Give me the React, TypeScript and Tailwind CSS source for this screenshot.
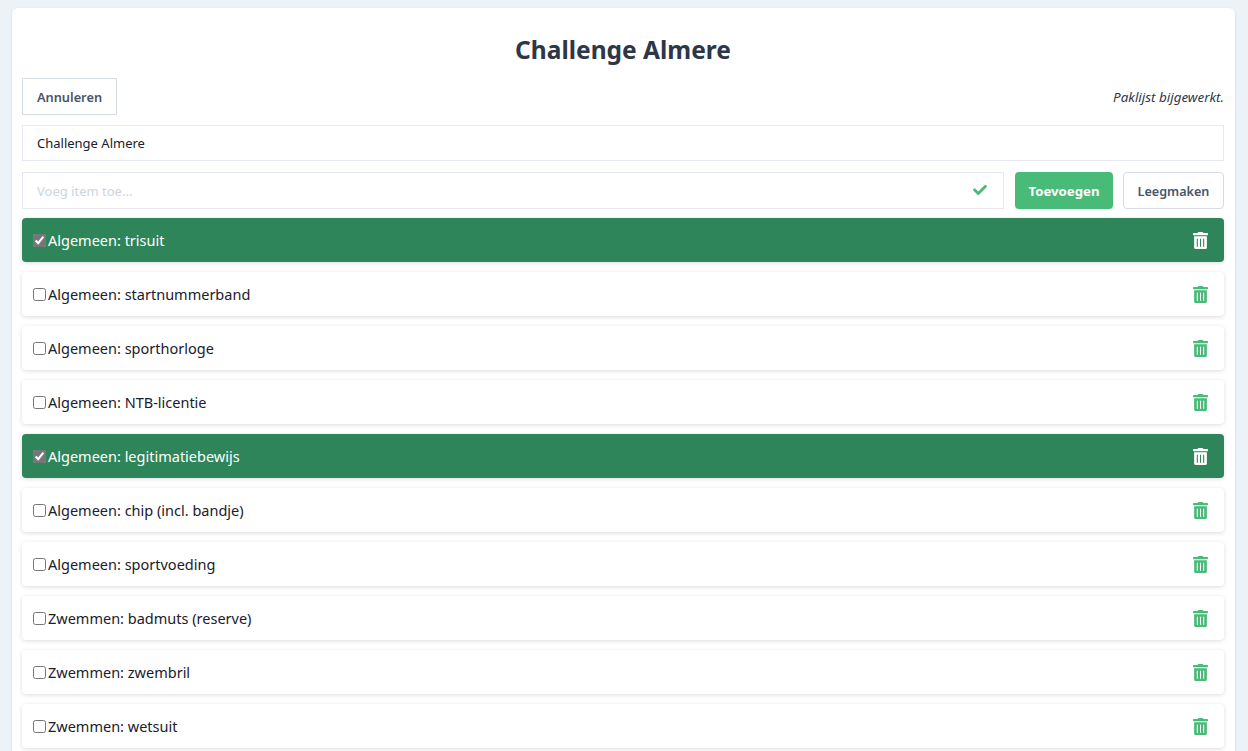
import { FaCheck, FaTrashAlt } from 'react-icons/fa';

const ITEMS = [
    { label: 'Algemeen: trisuit', checked: true },
    { label: 'Algemeen: startnummerband', checked: false },
    { label: 'Algemeen: sporthorloge', checked: false },
    { label: 'Algemeen: NTB-licentie', checked: false },
    { label: 'Algemeen: legitimatiebewijs', checked: true },
    { label: 'Algemeen: chip (incl. bandje)', checked: false },
    { label: 'Algemeen: sportvoeding', checked: false },
    { label: 'Zwemmen: badmuts (reserve)', checked: false },
    { label: 'Zwemmen: zwembril', checked: false },
    { label: 'Zwemmen: wetsuit', checked: false },
];

export default function App() {
    return (
        <div className="h-[751px] overflow-hidden bg-[#edf2f7] pl-3 pr-[13px] pt-2 font-['Noto_Sans','Open_Sans',sans-serif] text-[#2d3748]">
            <div className="rounded-md bg-white pb-4 pl-2.5 pr-[11px] pt-[23px] shadow-sm">
                <h1 className="mb-[9px] text-center text-[24.5px] leading-[38px] font-bold">Challenge Almere</h1>

                <div className="flex items-center justify-between">
                    <button className="h-[37px] w-[95px] border border-[#d5dce6] bg-white pt-0.5 text-[12.8px] font-semibold text-[#4a5568]">
                        Annuleren
                    </button>
                    <span className="pt-0.5 text-[13.4px] italic text-[#2d3748]">Paklijst bijgewerkt.</span>
                </div>

                <input
                    readOnly
                    value="Challenge Almere"
                    className="mt-2.5 block h-9 w-full border border-[#e6eaf0] px-[14px] text-[13px] text-[#1a202c] outline-none"
                />

                <div className="mt-[11px] flex items-stretch">
                    <div className="relative flex-1">
                        <input
                            readOnly
                            placeholder="Voeg item toe..."
                            className="block h-[37px] w-full border border-[#e6eaf0] px-[14px] text-[13px] outline-none placeholder:text-[#cbd5e0]"
                        />
                        <FaCheck size={14} className="absolute right-[17px] top-[11px] text-[#48bb78]" />
                    </div>
                    <button className="ml-[11px] w-[98px] rounded-sm bg-[#48bb78] pt-0.5 text-[13.2px] font-bold text-white">Toevoegen</button>
                    <button className="ml-2.5 w-[101px] rounded-sm border border-[#d5dce6] bg-white pt-[3px] text-[12.6px] font-semibold text-[#4a5568]">
                        Leegmaken
                    </button>
                </div>

                <ul className="mt-[9px] flex flex-col gap-[10px]">
                    {ITEMS.map(item => (
                        <li
                            key={item.label}
                            className={`flex h-[44px] items-center justify-between rounded-[4px] pl-[11px] pr-[15px] shadow-[0_1px_4px_rgba(0,0,0,0.14)] ${
                                item.checked ? 'bg-[#2f855a] text-white' : 'bg-white text-[#1a202c]'
                            }`}
                        >
                            <label className="flex items-center gap-[2px] text-[14.5px]">
                                <input type="checkbox" readOnly checked={item.checked} className="m-0 h-[13px] w-[13px] accent-[#767676]" />
                                <span className="pt-0.5">{item.label}</span>
                            </label>
                            <FaTrashAlt size={17} className={`mt-px ${item.checked ? 'text-white' : 'text-[#48bb78]'}`} />
                        </li>
                    ))}
                </ul>
            </div>
        </div>
    );
}
